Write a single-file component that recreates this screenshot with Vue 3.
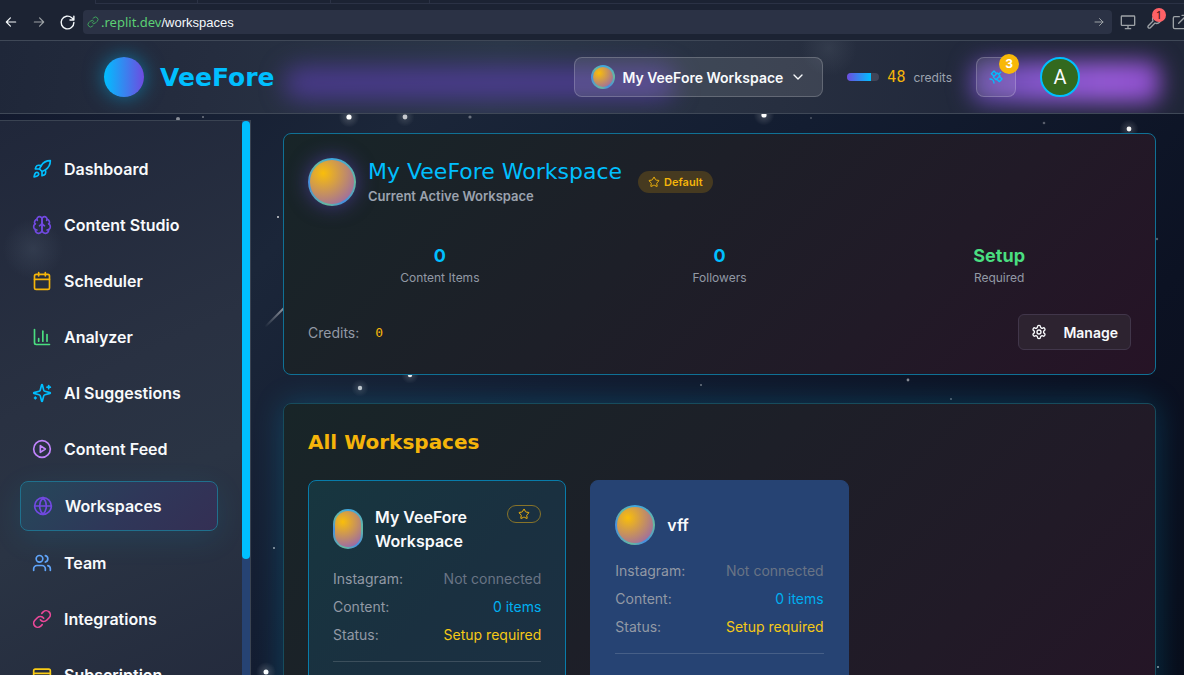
<script setup>
import { ref } from 'vue'

const address = ref('/workspaces')

const icons = {
  rocket: ['M4.5 16.5c-1.5 1.26-2 5-2 5s3.74-.5 5-2c.71-.84.7-2.13-.09-2.91a2.18 2.18 0 0 0-2.91-.09z', 'm12 15-3-3a22 22 0 0 1 2-3.95A12.88 12.88 0 0 1 22 2c0 2.72-.78 7.5-6 11a22.35 22.35 0 0 1-4 2z', 'M9 12H4s.55-3.03 2-4c1.62-1.08 5 0 5 0', 'M12 15v5s3.03-.55 4-2c1.08-1.62 0-5 0-5'],
  brain: ['M12 5a3 3 0 1 0-5.997.125 4 4 0 0 0-2.526 5.77 4 4 0 0 0 .556 6.588A4 4 0 1 0 12 18Z', 'M12 5a3 3 0 1 1 5.997.125 4 4 0 0 1 2.526 5.77 4 4 0 0 1-.556 6.588A4 4 0 1 1 12 18Z', 'M15 13a4.5 4.5 0 0 1-3-4 4.5 4.5 0 0 1-3 4', 'M17.599 6.5a3 3 0 0 0 .399-1.375', 'M6.003 5.125A3 3 0 0 0 6.401 6.5', 'M3.477 10.896a4 4 0 0 1 .585-.396', 'M19.938 10.5a4 4 0 0 1 .585.396', 'M6 18a4 4 0 0 1-1.967-.516', 'M19.967 17.484A4 4 0 0 1 18 18'],
  calendar: ['M8 2v4', 'M16 2v4', 'M5 4h14a2 2 0 0 1 2 2v14a2 2 0 0 1-2 2H5a2 2 0 0 1-2-2V6a2 2 0 0 1 2-2z', 'M3 10h18'],
  chart: ['M3 3v16a2 2 0 0 0 2 2h16', 'M18 17V9', 'M13 17V5', 'M8 17v-3'],
  sparkles: ['M9.937 15.5A2 2 0 0 0 8.5 14.063l-6.135-1.582a.5.5 0 0 1 0-.962L8.5 9.936A2 2 0 0 0 9.937 8.5l1.582-6.135a.5.5 0 0 1 .963 0L14.063 8.5A2 2 0 0 0 15.5 9.937l6.135 1.581a.5.5 0 0 1 0 .964L15.5 14.063a2 2 0 0 0-1.437 1.437l-1.582 6.135a.5.5 0 0 1-.963 0z', 'M20 3v4', 'M22 5h-4', 'M4 17v2', 'M5 18H3'],
  play: ['M22 12a10 10 0 1 1-20 0 10 10 0 0 1 20 0z', 'm10 8 6 4-6 4V8z'],
  globe: ['M22 12a10 10 0 1 1-20 0 10 10 0 0 1 20 0z', 'M12 2a14.5 14.5 0 0 0 0 20 14.5 14.5 0 0 0 0-20', 'M2 12h20'],
  users: ['M16 21v-2a4 4 0 0 0-4-4H6a4 4 0 0 0-4 4v2', 'M13 7a4 4 0 1 1-8 0 4 4 0 0 1 8 0z', 'M22 21v-2a4 4 0 0 0-3-3.87', 'M16 3.13a4 4 0 0 1 0 7.75'],
  link: ['M10 13a5 5 0 0 0 7.54.54l3-3a5 5 0 0 0-7.07-7.07l-1.72 1.71', 'M14 11a5 5 0 0 0-7.54-.54l-3 3a5 5 0 0 0 7.07 7.07l1.71-1.71'],
  card: ['M4 5h16a2 2 0 0 1 2 2v10a2 2 0 0 1-2 2H4a2 2 0 0 1-2-2V7a2 2 0 0 1 2-2z', 'M2 10h20']
}

const nav = [
  { label: 'Dashboard', icon: 'rocket', tone: 'cyan' },
  { label: 'Content Studio', icon: 'brain', tone: 'violet' },
  { label: 'Scheduler', icon: 'calendar', tone: 'gold' },
  { label: 'Analyzer', icon: 'chart', tone: 'green' },
  { label: 'AI Suggestions', icon: 'sparkles', tone: 'cyan' },
  { label: 'Content Feed', icon: 'play', tone: 'purple' },
  { label: 'Workspaces', icon: 'globe', tone: 'violet', active: true },
  { label: 'Team', icon: 'users', tone: 'blue' },
  { label: 'Integrations', icon: 'link', tone: 'pink' },
  { label: 'Subscription', icon: 'card', tone: 'yellow' }
]

const stats = [
  { value: '0', label: 'Content Items' },
  { value: '0', label: 'Followers' },
  { value: 'Setup', label: 'Required', green: true }
]

const workspaces = [
  { name: 'My VeeFore Workspace', current: true },
  { name: 'vff', current: false }
]

const starPath = 'M11.525 2.295a.53.53 0 0 1 .95 0l2.31 4.679a2.12 2.12 0 0 0 1.595 1.16l5.166.756a.53.53 0 0 1 .294.904l-3.736 3.638a2.12 2.12 0 0 0-.611 1.878l.882 5.14a.53.53 0 0 1-.771.56l-4.618-2.428a2.12 2.12 0 0 0-1.973 0L6.396 21.01a.53.53 0 0 1-.77-.56l.881-5.139a2.12 2.12 0 0 0-.611-1.879L2.16 9.795a.53.53 0 0 1 .294-.906l5.165-.755a2.12 2.12 0 0 0 1.597-1.16z'

const stars = [
  { x: 349, y: 117, r: 2.6, o: 1 }, { x: 405, y: 117, r: 2.4, o: 0.75 }, { x: 470, y: 117, r: 1.6, o: 0.35 },
  { x: 764, y: 115, r: 2.6, o: 1 }, { x: 811, y: 118, r: 1, o: 0.25 }, { x: 1044, y: 123, r: 1.3, o: 0.3 },
  { x: 1129, y: 129, r: 2.4, o: 0.95 }, { x: 178, y: 119, r: 2, o: 0.5 }, { x: 203, y: 117, r: 1, o: 0.4 },
  { x: 278, y: 217, r: 1, o: 0.8 }, { x: 274, y: 548, r: 1, o: 0.6 }, { x: 266, y: 672, r: 2.5, o: 1 },
  { x: 360, y: 388, r: 2.2, o: 0.75 }, { x: 410, y: 375, r: 2.2, o: 0.9 }, { x: 701, y: 385, r: 1, o: 0.4 },
  { x: 908, y: 380, r: 1.4, o: 0.5 }, { x: 951, y: 399, r: 1, o: 0.35 }, { x: 1157, y: 239, r: 1.2, o: 0.3 },
  { x: 1158, y: 667, r: 1, o: 0.6 }
]
</script>

<template>
  <div class="page">
    <div class="browser">
      <div class="tabs"><i></i><i></i><i></i><i></i></div>
      <div class="toolbar">
        <button class="tool" aria-label="Back"><svg viewBox="0 0 24 24"><path d="M20 12H4M11 5l-7 7 7 7" /></svg></button>
        <button class="tool dim" aria-label="Forward"><svg viewBox="0 0 24 24"><path d="M4 12h16M13 5l7 7-7 7" /></svg></button>
        <button class="tool reload" aria-label="Reload"><svg viewBox="0 0 24 24"><path d="M21 12a9 9 0 1 1-3-6.700L21 8M21 3v5.500h-5.500" /></svg></button>
        <div class="address">
          <svg class="chain" viewBox="0 0 24 24"><path v-for="d in icons.link" :key="d" :d="d" /></svg>
          <span class="host">.replit.dev</span>
          <input v-model="address" aria-label="Address" spellcheck="false" />
          <svg class="go" viewBox="0 0 24 24"><path d="M4 12h16M13 5l7 7-7 7" /></svg>
        </div>
        <div class="devtools">
          <button class="tool monitor" aria-label="Device preview"><svg viewBox="0 0 24 24"><path d="M3 3h18a1 1 0 0 1 1 1v12a1 1 0 0 1-1 1H3a1 1 0 0 1-1-1V4a1 1 0 0 1 1-1zM8 22h8M12 17v5" /></svg></button>
          <button class="tool wrench" aria-label="Tools">
            <svg viewBox="0 0 24 24"><path d="M14.700 6.300a1 1 0 0 0 0 1.400l1.600 1.600a1 1 0 0 0 1.400 0l3.800-3.800a6 6 0 0 1-8 8l-7 7a2 2 0 0 1-3-3l7-7a6 6 0 0 1 8-8z" /></svg>
            <span>1</span>
          </button>
          <button class="tool popout" aria-label="Open in new tab"><svg viewBox="0 0 24 24"><path d="M11 4H4a2 2 0 0 0-2 2v14a2 2 0 0 0 2 2h14a2 2 0 0 0 2-2v-7M15 2h7v7M22 2 10 14" /></svg></button>
        </div>
      </div>
    </div>

    <svg class="sky" aria-hidden="true">
      <defs>
        <linearGradient id="trail" x1="0" y1="1" x2="1" y2="0">
          <stop offset="0" stop-color="#fff" stop-opacity="0" />
          <stop offset="1" stop-color="#fff" stop-opacity="0.6" />
        </linearGradient>
        <radialGradient id="halo">
          <stop offset="0" stop-color="#fff" stop-opacity="0.2" />
          <stop offset="1" stop-color="#fff" stop-opacity="0" />
        </radialGradient>
      </defs>
      <g v-for="(s, i) in stars" :key="i" :opacity="s.o">
        <circle v-if="s.r > 2" :cx="s.x" :cy="s.y" :r="s.r * 4" fill="url(#halo)" />
        <circle :cx="s.x" :cy="s.y" :r="s.r" fill="#fff" />
      </g>
      <path d="M265 327 287 305" stroke="url(#trail)" stroke-width="2" />
    </svg>

    <header class="header">
      <div class="glow violet-glow"></div>
      <div class="glow purple-glow"></div>
      <a class="brand" href="#"><span class="brand-mark"></span><span class="brand-name">VeeFore</span></a>
      <div class="actions">
        <button class="switcher">
          <span class="orb small"></span>
          <span>My VeeFore Workspace</span>
          <svg class="chevron" viewBox="0 0 24 24"><path d="m6 9 6 6 6-6" /></svg>
        </button>
        <div class="credits">
          <div class="meter"><div></div></div>
          <span class="amount">48</span>
          <span class="unit">credits</span>
        </div>
        <button class="alerts" aria-label="Notifications">
          <svg viewBox="0 0 24 24"><path d="M13 7 9 3 5 7l4 4M17 11l4 4-4 4-4-4M8 12l4 4 6-6-4-4ZM16 8l3-3M9 21a6 6 0 0 0-6-6" /></svg>
          <span>3</span>
        </button>
        <button class="avatar">A</button>
      </div>
    </header>

    <div class="body">
      <aside class="sidebar">
        <nav>
          <a v-for="n in nav" :key="n.label" href="#" :class="['nav-item', { active: n.active }]">
            <svg :class="n.tone" viewBox="0 0 24 24"><path v-for="d in icons[n.icon]" :key="d" :d="d" /></svg>
            <span>{{ n.label }}</span>
          </a>
        </nav>
        <div class="scrollbar"><div></div></div>
      </aside>

      <main class="main">
        <section class="panel current">
          <div class="current-head">
            <span class="orb large"></span>
            <div>
              <h1>My VeeFore Workspace</h1>
              <p>Current Active Workspace</p>
            </div>
            <span class="default-badge"><svg viewBox="0 0 24 24"><path :d="starPath" /></svg>Default</span>
          </div>
          <div class="stats">
            <div v-for="s in stats" :key="s.label">
              <strong :class="{ green: s.green }">{{ s.value }}</strong>
              <span>{{ s.label }}</span>
            </div>
          </div>
          <div class="current-foot">
            <div class="balance"><span>Credits:</span><b>0</b></div>
            <button class="manage">
              <svg viewBox="0 0 24 24"><path d="M12.220 2h-.44a2 2 0 0 0-2 2v.18a2 2 0 0 1-1 1.730l-.43.25a2 2 0 0 1-2 0l-.15-.08a2 2 0 0 0-2.730.73l-.22.38a2 2 0 0 0 .73 2.730l.15.1a2 2 0 0 1 1 1.720v.51a2 2 0 0 1-1 1.740l-.15.09a2 2 0 0 0-.73 2.730l.22.38a2 2 0 0 0 2.730.73l.15-.08a2 2 0 0 1 2 0l.43.25a2 2 0 0 1 1 1.730V20a2 2 0 0 0 2 2h.44a2 2 0 0 0 2-2v-.18a2 2 0 0 1 1-1.730l.43-.25a2 2 0 0 1 2 0l.15.08a2 2 0 0 0 2.730-.73l.22-.39a2 2 0 0 0-.73-2.730l-.15-.08a2 2 0 0 1-1-1.740v-.5a2 2 0 0 1 1-1.740l.15-.09a2 2 0 0 0 .73-2.730l-.22-.38a2 2 0 0 0-2.730-.73l-.15.08a2 2 0 0 1-2 0l-.43-.25a2 2 0 0 1-1-1.730V4a2 2 0 0 0-2-2z" /><circle cx="12" cy="12" r="3" /></svg>
              Manage
            </button>
          </div>
        </section>

        <section class="panel all">
          <h2>All Workspaces</h2>
          <div class="grid">
            <article v-for="w in workspaces" :key="w.name" :class="['workspace', { selected: w.current }]">
              <div class="workspace-head">
                <span :class="['orb', w.current ? 'narrow' : 'medium']"></span>
                <h3>{{ w.name }}</h3>
                <span v-if="w.current" class="star-badge"><svg viewBox="0 0 24 24"><path :d="starPath" /></svg></span>
              </div>
              <dl>
                <div><dt>Instagram:</dt><dd class="muted">Not connected</dd></div>
                <div><dt>Content:</dt><dd class="items">0 items</dd></div>
                <div><dt>Status:</dt><dd class="warn">Setup required</dd></div>
              </dl>
              <hr />
            </article>
          </div>
        </section>
      </main>
    </div>
  </div>
</template>

<style>
body { background: #0c1122; overflow: hidden; }
</style>

<style scoped>
* { box-sizing: border-box; }
button { font: inherit; color: inherit; background: none; border: 0; padding: 0; }
a { color: inherit; text-decoration: none; }
h1, h2, h3, p, dl, dd { margin: 0; }
svg { fill: none; stroke: currentColor; stroke-width: 2; stroke-linecap: round; stroke-linejoin: round; flex: none; }

.page {
  position: relative;
  display: flex;
  flex-direction: column;
  height: 100vh;
  overflow: hidden;
  color: #f8fafc;
  font-family: Inter, "Liberation Sans", sans-serif;
  background: linear-gradient(135deg, #10162b 0%, #1b2639 28%, #131d31 50%, #0c1223 78%, #080d1a 100%);
}
.sky { position: absolute; inset: 0; width: 100%; height: 100%; stroke: none; }

.browser { position: relative; z-index: 1; flex: none; height: 40px; background: #1c2333; font-family: "Noto Sans", sans-serif; }
.tabs { display: flex; height: 4px; margin-left: 95px; border-bottom: 1px solid #2b3245; }
.tabs i { width: 102px; border-left: 1px solid #2b3245; }
.tabs i:nth-child(2) { width: 133px; }
.tabs i:nth-child(3) { width: 99px; }
.toolbar { display: flex; align-items: center; height: 36px; padding-left: 4px; }
.tool { position: relative; display: flex; color: #f5f9fc; }
.tool svg { width: 14px; height: 14px; }
.tool + .tool { margin-left: 14px; }
.dim { color: #9da2a6; }
.tool.reload { margin-left: 13px; }
.tool.reload svg { width: 17px; height: 17px; }
.address { display: flex; flex: 1; align-items: center; height: 24px; margin-left: 7px; padding: 0 7px 0 4px; border-radius: 4px; background: #2b3245; font-size: 13px; }
.chain { width: 12px; height: 12px; margin-right: 2px; color: #3fa35c; }
.host { color: #5bcf74; }
.address input { flex: 1; min-width: 0; padding: 0; border: 0; outline: 0; background: none; color: #f5f9fc; font: 13px "Liberation Sans", sans-serif; }
.go { width: 12px; height: 12px; color: #9da2a6; }
.devtools { display: flex; flex: none; align-items: center; width: 72px; padding-left: 8px; color: #9da2a6; }
.devtools .tool { color: #9da2a6; }
.devtools .tool + .tool { margin-left: 10px; }
.devtools .tool svg { width: 16px; height: 16px; }
.wrench span { position: absolute; top: -6px; left: 6px; width: 14px; height: 14px; border-radius: 50%; background: #ff6166; color: #3a1012; font-size: 11px; line-height: 14px; text-align: center; }

.header {
  position: relative;
  display: flex;
  flex: none;
  align-items: center;
  justify-content: space-between;
  height: 74px;
  padding: 0 104px;
  overflow: hidden;
  border: solid #3f4857;
  border-width: 1px 0;
  background: radial-gradient(circle at 70% 10%, rgba(90, 100, 115, 0.250), transparent 28px), linear-gradient(100deg, #1f2739 0%, #252d3f 18%, #2b3748 42%, #272f40 66%, #20273a 85%, #202638 100%);
}
.glow { position: absolute; }
.violet-glow { left: 24%; right: 43%; top: 26px; height: 32px; border-radius: 16px; background: rgba(86, 62, 165, 0.750); filter: blur(12px); }
.purple-glow { left: 82%; right: 2%; top: 20px; height: 42px; border-radius: 12px; background: linear-gradient(90deg, #6046a4, #8557cb 35%, #9659d6 75%, #8e4fcc); filter: blur(11px); }
.brand { position: relative; display: flex; align-items: center; gap: 16px; }
.brand-mark { width: 40px; height: 40px; border-radius: 50%; background: linear-gradient(90deg, #00bfff, #6d4ce0); box-shadow: 0 0 20px rgba(0, 191, 255, 0.5); }
.brand-name, h1, h2 { font-family: "DejaVu Sans", sans-serif; }
.brand-name { color: #00bfff; font-size: 25px; font-weight: 700; }
.actions { position: relative; display: flex; align-items: center; gap: 24px; }
.switcher { display: flex; align-items: center; gap: 7px; height: 40px; padding: 0 16px; border: 1px solid rgba(255, 255, 255, 0.200); border-radius: 8px; background: rgba(255, 255, 255, 0.100); font-size: 14px; font-weight: 600; }
.chevron { width: 16px; height: 16px; }
.orb {
  flex: none;
  border: 2px solid transparent;
  border-radius: 999px;
  background: radial-gradient(circle at 30% 30%, #f9be0a, #8b5cc0) padding-box, conic-gradient(#3fa5df, #67b8a0 90deg, #468ee0 150deg, #67b8a0 190deg, #468ee0 270deg, #67b8a0 315deg, #3fa5df) border-box;
}
.small { width: 24px; height: 24px; }
.medium { width: 40px; height: 40px; }
.narrow { width: 30px; height: 40px; }
.large { width: 48px; height: 48px; box-shadow: 0 0 20px rgba(109, 76, 224, 0.5); }
.credits { display: flex; align-items: center; gap: 8px; }
.meter { width: 32px; height: 8px; overflow: hidden; border-radius: 4px; background: #404558; }
.meter div { width: 75%; height: 100%; background: linear-gradient(90deg, #6d4ce0, #00bfff); }
.amount { color: #f5b50a; font: 15px "DejaVu Sans Mono", monospace; }
.unit { color: #9ca3af; font-size: 12px; }
.alerts { position: relative; display: flex; align-items: center; justify-content: center; width: 40px; height: 40px; border: 1px solid rgba(255, 255, 255, 0.200); border-radius: 8px; background: rgba(255, 255, 255, 0.100); color: #00bfff; }
.alerts svg { width: 16px; height: 16px; }
.alerts span { position: absolute; top: -4px; right: -4px; width: 20px; height: 20px; border-radius: 50%; background: #f8b808; color: #fff; font-size: 12px; font-weight: 700; line-height: 20px; text-align: center; }
.avatar { width: 40px; height: 40px; border: 2px solid #00bfff; border-radius: 50%; background: #33691e; font: 20px Roboto, sans-serif; }

.body { position: relative; display: flex; flex: 1; min-height: 0; }
.sidebar { display: flex; flex: none; width: 251px; margin-top: 6px; border: solid #3a4352; border-width: 1px 1px 0 0; background: radial-gradient(circle at 33px 128px, rgba(90, 105, 125, 0.250), transparent 30px), linear-gradient(155deg, #20273a 0%, #293142 45%, #2a3444 65%, #242b3d 100%); }
nav { display: flex; flex: 1; flex-direction: column; gap: 8px; padding: 24px 24px 0 20px; }
.nav-item { display: flex; flex: none; align-items: center; gap: 12px; height: 48px; padding: 0 12px; border-radius: 8px; font-size: 16px; font-weight: 600; }
.nav-item svg { width: 20px; height: 20px; }
.nav-item.active { height: 50px; border: 1px solid #20708d; background: linear-gradient(135deg, #25485a, #2f3759 55%, #342f54); box-shadow: 0 8px 30px rgba(0, 191, 255, 0.100); }
.cyan { color: #00bfff; }
.violet { color: #7149e0; }
.gold { color: #f5b50a; }
.green { color: #4ade80; }
.purple { color: #c084fc; }
.blue { color: #60a5fa; }
.pink { color: #ec4899; }
.yellow { color: #facc15; }
.scrollbar { flex: none; width: 8px; background: #264373; }
.scrollbar div { height: 79%; border-radius: 4px; background: #00bfff; }

.main { display: flex; flex: 1; flex-direction: column; gap: 28px; min-width: 0; padding: 19px 28px 0 32px; }
.panel { flex: none; padding: 24px; border: 1px solid #107195; border-radius: 8px; background: linear-gradient(135deg, #182528 0%, #1d1f28 42%, #211a27 70%, #261326 100%); }
.current-head { display: flex; align-items: center; gap: 12px; margin-bottom: 36px; }
h1 { color: #00bfff; font-size: 22px; font-weight: 400; line-height: 28px; }
.current-head p { color: #9ca3af; font-size: 13px; font-weight: 600; line-height: 20px; }
.default-badge { display: flex; align-items: center; gap: 4px; height: 22px; margin-left: 4px; padding: 0 10px; border-radius: 11px; background: #463a20; color: #f5b50a; font-size: 11px; font-weight: 600; }
.default-badge svg, .star-badge svg { width: 12px; height: 12px; }
.stats { display: grid; grid-template-columns: repeat(3, 1fr); gap: 16px; margin-bottom: 28px; text-align: center; }
.stats strong { display: block; color: #00bfff; font-size: 18px; line-height: 28px; }
.stats strong.green { color: #4ade80; }
.stats span { display: block; color: #9299a5; font-size: 12px; line-height: 16px; }
.current-foot { display: flex; align-items: center; justify-content: space-between; }
.balance { display: flex; align-items: center; gap: 16px; color: #9299a5; font-size: 14px; }
.balance b { color: #f5b50a; font: 13px "DejaVu Sans Mono", monospace; }
.manage { display: flex; align-items: center; gap: 16px; height: 36px; padding: 0 12px; border: 1px solid #41364a; border-radius: 6px; background: #2d2330; font-size: 14px; font-weight: 600; }
.manage svg { width: 16px; height: 16px; }

.all { min-height: 400px; border-color: #174c5d; box-shadow: 0 0 30px rgba(0, 191, 255, 0.220); }
h2 { margin-bottom: 24px; color: #f5b50a; font-size: 20px; font-weight: 700; line-height: 28px; }
.grid { display: grid; grid-template-columns: repeat(3, 1fr); gap: 24px; }
.workspace { min-height: 260px; padding: 24px; border: 1px solid #264373; border-radius: 8px; background: #264373; }
.selected { border-color: #087caa; background: linear-gradient(135deg, #17363f, #1a3040 50%, #1b3044); }
.workspace-head { display: flex; align-items: center; gap: 12px; margin-bottom: 16px; }
h3 { flex: 1; font-size: 16px; font-weight: 600; line-height: 24px; }
.star-badge { display: flex; align-self: flex-start; align-items: center; justify-content: center; width: 34px; height: 18px; border: 1px solid #877329; border-radius: 9px; color: #f5b50a; }
dl { display: flex; flex-direction: column; gap: 8px; font-size: 14px; line-height: 20px; }
dl div { display: flex; justify-content: space-between; }
dt { color: #9299a5; }
.muted { color: #697485; }
.items { color: #00aff0; }
.warn { color: #f5c916; }
hr { height: 1px; margin: 16px 0 0; border: 0; background: rgba(255, 255, 255, 0.150); }
</style>
